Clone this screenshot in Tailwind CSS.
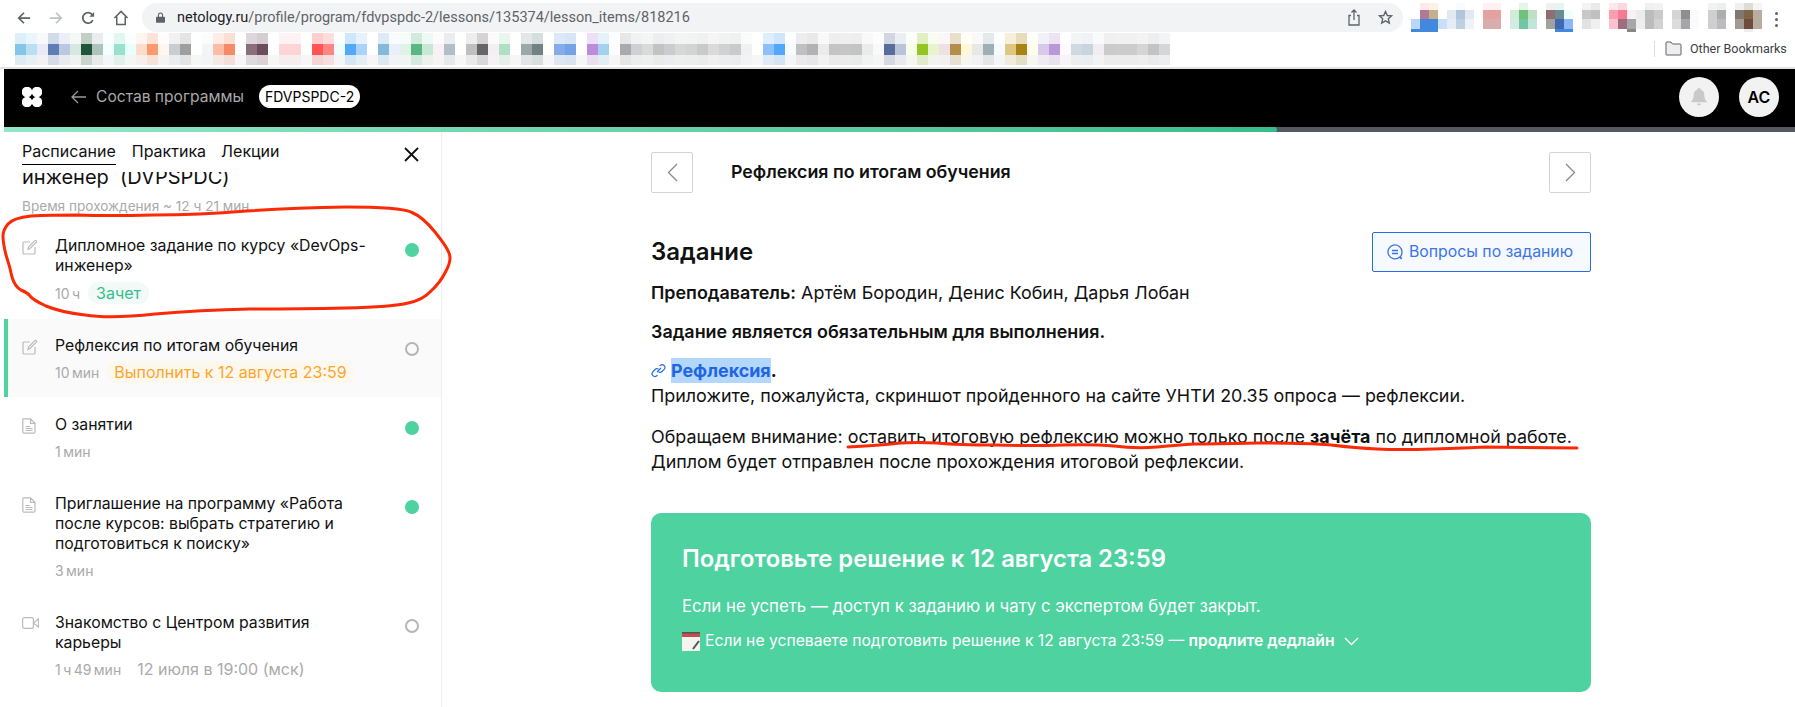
<!DOCTYPE html>
<html lang="ru">

<head>
    <meta charset="UTF-8">
    <title>Нетология</title>
    <script src="https://cdn.jsdelivr.net/npm/@tailwindcss/browser@4"></script>
</head>

<body>
    <div class="relative w-[1795px] h-[707px] overflow-hidden bg-white text-[#111] [font-family:Inter,sans-serif]">

        <!-- browser toolbar -->
        <div class="h-[33px] pt-[3px] flex items-start [font-family:Roboto,sans-serif]">
            <div class="w-[142px] h-[29px] pl-[17px] flex items-center gap-[18px] flex-none">
                <svg class="w-[14px] h-[14px]" viewBox="0 0 16 16" fill="none" stroke="#5f6368" stroke-width="2"><path d="M15 8H2M8 2 2 8l6 6"/></svg>
                <svg class="w-[14px] h-[14px]" viewBox="0 0 16 16" fill="none" stroke="#bdc1c6" stroke-width="2"><path d="M1 8h13M8 2l6 6-6 6"/></svg>
                <svg class="w-[14px] h-[14px]" viewBox="0 0 16 16" fill="none" stroke="#5f6368" stroke-width="2"><path d="M13.500 10.500A6 6 0 1 1 13 4.500"/><path d="M15 1v5.500H9.500" fill="#5f6368" stroke="none"/></svg>
                <svg class="w-[16px] h-[16px]" viewBox="0 0 16 17" fill="none" stroke="#5f6368" stroke-width="1.600"><path d="M1 8.500 8 1.500l7 7M3.500 7v8.500h9V7"/></svg>
            </div>
            <div class="w-[1261px] h-[29px] rounded-full bg-[#f1f3f4] flex items-center pl-[14px] flex-none">
                <svg class="w-[9px] h-[11px] mr-[12px]" viewBox="0 0 11 13" fill="#5f6368"><path d="M1 5.500h9a1 1 0 0 1 1 1V12a1 1 0 0 1-1 1H1a1 1 0 0 1-1-1V6.500a1 1 0 0 1 1-1z"/><path d="M3 6V3.500a2.500 2.500 0 0 1 5 0V6" fill="none" stroke="#5f6368" stroke-width="1.300"/></svg>
                <span class="text-[14.500px] text-[#5f6368]"><span class="text-[#202124]">netology.ru</span>/profile/program/fdvpspdc-2/lessons/135374/lesson_items/818216</span>
                <svg class="w-[14px] h-[17px] ml-auto" viewBox="0 0 14 17" fill="none" stroke="#5f6368" stroke-width="1.300"><path d="M4 6.500H2v9.500h10V6.500h-2M7 11V1M4.500 3.500 7 1l2.500 2.500"/></svg>
                <svg class="w-[15px] h-[15px] ml-[17px] mr-[10px]" viewBox="0 0 15 15" fill="none" stroke="#5f6368" stroke-width="1.400"><path d="m7.500 1.500 1.800 4 4.300.4-3.300 2.900 1 4.300-3.800-2.300-3.800 2.300 1-4.300L1.400 5.900l4.300-.4z"/></svg>
            </div>
            <div class="relative ml-[8px] w-[351px] flex-none h-[30px]">
                <div class="flex flex-col w-full" data-extensions></div>
            </div>
            <div class="ml-[13px] mt-[9px] flex flex-col gap-[3px]">
                <span class="w-[3px] h-[3px] rounded-full bg-[#5f6368]"></span>
                <span class="w-[3px] h-[3px] rounded-full bg-[#5f6368]"></span>
                <span class="w-[3px] h-[3px] rounded-full bg-[#5f6368]"></span>
            </div>
        </div>

        <!-- bookmarks -->
        <div class="h-[34px] flex items-start [font-family:Roboto,sans-serif]">
            <div class="w-[1654px] pl-[15px] flex-none" data-bookmarks></div>
            <div class="mt-[8px] w-px h-[16px] bg-[#dadce0] flex-none"></div>
            <svg class="ml-[10px] mt-[8px] w-[17px] h-[15px] flex-none" viewBox="0 0 17 15" fill="#eeeeee" stroke="#5f6368" stroke-width="1"><path d="M1 13.500V2a1 1 0 0 1 1-1h4l1.500 2H15a1 1 0 0 1 1 1v9.500a.5.5 0 0 1-.5.5h-14a.5.5 0 0 1-.5-.5z"/></svg>
            <span class="ml-[8px] mt-[8px] text-[12.500px] leading-[16px] text-[#3c4043] whitespace-nowrap">Other Bookmarks</span>
        </div>
        <div class="h-[2px] bg-[#e3e3e3]"></div>

        <div class="pl-[4px]">
            <!-- site header -->
            <header class="h-[58px] pb-[3px] bg-black flex items-center pl-[18px] pr-[16px]">
                <svg class="w-[20px] h-[20px]" viewBox="0 0 20 20" fill="#fff"><circle cx="5" cy="5" r="5.300"/><circle cx="15" cy="5" r="5.300"/><circle cx="5" cy="15" r="5.300"/><circle cx="15" cy="15" r="5.300"/></svg>
                <svg class="ml-[29px] w-[15px] h-[14px]" viewBox="0 0 15 14" fill="none" stroke="#9a9a9a" stroke-width="1.300"><path d="M15 7H1M7 1 1 7l6 6"/></svg>
                <span class="ml-[10px] text-[15.600px] text-[#a8a8a8] whitespace-nowrap">Состав программы</span>
                <span class="ml-[15px] h-[23px] px-[6px] rounded-full bg-white text-black text-[14px] leading-[23px] whitespace-nowrap">FDVPSPDC-2</span>
                <span class="ml-auto w-[40px] h-[40px] rounded-full bg-[#f2f2f2] flex items-center justify-center">
                    <svg class="w-[16px] h-[18px]" viewBox="0 0 16 18" fill="#c9c9c9"><path d="M8 0a1.500 1.500 0 0 1 1.500 1.600C12 2.300 13.300 4.500 13.300 7c0 3.500 1 4.800 2.500 6.500.2.300 0 .7-.3.700H.5c-.4 0-.5-.4-.3-.7C1.700 11.800 2.700 10.500 2.700 7c0-2.500 1.300-4.700 3.800-5.400A1.500 1.500 0 0 1 8 0zM6 15.500h4a2 2 0 0 1-4 0z"/></svg>
                </span>
                <span class="ml-[20px] w-[40px] h-[40px] rounded-full bg-[#f2f2f2] flex items-center justify-center text-[16px] font-semibold text-black">АС</span>
            </header>
            <!-- progress -->
            <div class="h-[5px] bg-[#54595f]">
                <div class="h-full w-[1273px] rounded-r-sm bg-gradient-to-r from-[#93e5c8] to-[#37bd8c]"></div>
            </div>

            <div class="flex">
                <!-- sidebar -->
                <aside class="w-[438px] h-[575px] flex-none border-r border-[#eeeeee] overflow-hidden">
                    <div class="h-[40px] pl-[18px] pr-[22px] flex items-start">
                        <span class="h-[33px] pt-[9px] text-[16px] leading-[20px] border-b border-black">Расписание</span>
                        <span class="ml-[16px] pt-[9px] text-[16px] leading-[20px]">Практика</span>
                        <span class="ml-[15px] pt-[9px] text-[16px] leading-[20px]">Лекции</span>
                        <svg class="ml-auto mt-[15px] w-[15px] h-[15px]" viewBox="0 0 15 15" stroke="#111" stroke-width="1.800"><path d="m1 1 13 13M14 1 1 14"/></svg>
                    </div>
                    <div class="h-[16px] pl-[18px] overflow-hidden flex items-end">
                        <span class="text-[20px] leading-[24px] -mb-[1px] whitespace-pre">инженер  (DVPSPDC)</span>
                    </div>
                    <p class="pl-[18px] mt-[8px] h-[20px] text-[13.600px] leading-[20px] text-[#aaaaaa]">Время прохождения ~ 12 ч 21 мин</p>

                    <ul class="mt-[3px]">
                        <li class="flex pl-[18px] pr-[22px] pt-[17px] pb-[14px]">
                            <svg class="w-[16px] h-[16px] mt-[3px] flex-none" viewBox="0 0 16 16" fill="none" stroke="#bbbbbb" stroke-width="1.200"><path d="M8 3H2a1 1 0 0 0-1 1v10a1 1 0 0 0 1 1h10a1 1 0 0 0 1-1V8"/><path d="M6 10.500 6.500 8l6.300-6.300a1 1 0 0 1 1.500 0 1 1 0 0 1 0 1.500L8 9.500z"/></svg>
                            <div class="ml-[17px] flex-1">
                                <p class="text-[15.800px] leading-[20px]">Дипломное задание по курсу «DevOps-<br>инженер»</p>
                                <div class="mt-[5px] h-[24px] flex items-center text-[14px] text-[#aaaaaa] [word-spacing:-1.500px]">
                                    <span>10 ч</span>
                                    <span class="ml-[8px] h-[22px] px-[8px] rounded-full bg-[#f1faf6] text-[16px] leading-[22px] text-[#39bd8d]">Зачет</span>
                                </div>
                            </div>
                            <span class="w-[14px] h-[14px] mt-[7px] rounded-full bg-[#4dd2a0] flex-none"></span>
                        </li>
                        <li class="flex pl-[14px] pr-[22px] pt-[17px] pb-[13px] bg-[#fafafa] border-l-4 border-[#4dd2a0]">
                            <svg class="w-[16px] h-[16px] mt-[3px] flex-none" viewBox="0 0 16 16" fill="none" stroke="#bbbbbb" stroke-width="1.200"><path d="M8 3H2a1 1 0 0 0-1 1v10a1 1 0 0 0 1 1h10a1 1 0 0 0 1-1V8"/><path d="M6 10.500 6.500 8l6.300-6.300a1 1 0 0 1 1.500 0 1 1 0 0 1 0 1.500L8 9.500z"/></svg>
                            <div class="ml-[17px] flex-1">
                                <p class="text-[15.800px] leading-[20px]">Рефлексия по итогам обучения</p>
                                <div class="mt-[4px] h-[24px] flex items-center text-[14px] text-[#aaaaaa]">
                                    <span class="[word-spacing:-1.500px]">10 мин</span>
                                    <span class="ml-[7px] h-[22px] px-[8px] rounded-full bg-[#fdf8ee] text-[16px] leading-[22px] text-[#ffa42b]">Выполнить к 12 августа 23:59</span>
                                </div>
                            </div>
                            <span class="w-[14px] h-[14px] mt-[6px] rounded-full border-2 border-[#b5b5b5] flex-none"></span>
                        </li>
                        <li class="flex pl-[18px] pr-[22px] pt-[18px] pb-[13px]">
                            <svg class="w-[14px] h-[16px] mt-[3px] mr-[2px] flex-none" viewBox="0 0 14 16" fill="none" stroke="#bbbbbb" stroke-width="1.200"><path d="M1.500.8H8.500L13 5.300V14a1.200 1.200 0 0 1-1.200 1.200H2A1.200 1.200 0 0 1 .8 14V1.500a.7.7 0 0 1 .7-.7zM8.500.8v4.500H13M3.500 8.500H8M3.500 10.500h7M3.500 12.500h7"/></svg>
                            <div class="ml-[17px] flex-1">
                                <p class="text-[15.800px] leading-[20px]">О занятии</p>
                                <div class="mt-[4px] h-[24px] flex items-center text-[14px] text-[#aaaaaa] [word-spacing:-1.500px]">1 мин</div>
                            </div>
                            <span class="w-[14px] h-[14px] mt-[6px] rounded-full bg-[#4dd2a0] flex-none"></span>
                        </li>
                        <li class="flex pl-[18px] pr-[22px] pt-[18px] pb-[13px]">
                            <svg class="w-[14px] h-[16px] mt-[3px] mr-[2px] flex-none" viewBox="0 0 14 16" fill="none" stroke="#bbbbbb" stroke-width="1.200"><path d="M1.500.8H8.500L13 5.300V14a1.200 1.200 0 0 1-1.200 1.200H2A1.200 1.200 0 0 1 .8 14V1.500a.7.7 0 0 1 .7-.7zM8.500.8v4.500H13M3.500 8.500H8M3.500 10.500h7M3.500 12.500h7"/></svg>
                            <div class="ml-[17px] flex-1">
                                <p class="text-[15.800px] leading-[20px]">Приглашение на программу «Работа<br>после курсов: выбрать стратегию и<br>подготовиться к поиску»</p>
                                <div class="mt-[4px] h-[24px] flex items-center text-[14px] text-[#aaaaaa] [word-spacing:-1.500px]">3 мин</div>
                            </div>
                            <span class="w-[14px] h-[14px] mt-[6px] rounded-full bg-[#4dd2a0] flex-none"></span>
                        </li>
                        <li class="flex pl-[18px] pr-[22px] pt-[18px] pb-[13px]">
                            <svg class="w-[17px] h-[12px] mt-[4px] -mr-[1px] flex-none" viewBox="0 0 17 12" fill="none" stroke="#bbbbbb" stroke-width="1.200"><rect x=".6" y=".6" width="10.800" height="10.800" rx="2"/><path d="m11.500 6 5-4v8z"/></svg>
                            <div class="ml-[17px] flex-1">
                                <p class="text-[15.800px] leading-[20px]">Знакомство с Центром развития<br>карьеры</p>
                                <div class="mt-[4px] h-[24px] flex items-center text-[14px] text-[#aaaaaa]">
                                    <span class="[word-spacing:-1.500px]">1 ч 49 мин</span>
                                    <span class="ml-[16px] text-[16px]">12 июля в 19:00 (мск)</span>
                                </div>
                            </div>
                            <span class="w-[14px] h-[14px] mt-[6px] rounded-full border-2 border-[#b5b5b5] flex-none"></span>
                        </li>
                    </ul>
                </aside>

                <!-- lesson -->
                <main class="w-[940px] ml-[209px] pt-[20px] flex-none">
                    <div class="h-[41px] flex items-center">
                        <span class="w-[42px] h-[41px] border border-[#d4d4d4] rounded-[2px] flex items-center justify-center">
                            <svg class="w-[11px] h-[19px]" viewBox="0 0 11 19" fill="none" stroke="#888888" stroke-width="1.300"><path d="M10 1 1.500 9.500 10 18"/></svg>
                        </span>
                        <h3 class="ml-[38px] text-[17.800px] font-semibold">Рефлексия по итогам обучения</h3>
                        <span class="ml-auto w-[42px] h-[41px] border border-[#d4d4d4] rounded-[2px] flex items-center justify-center">
                            <svg class="w-[11px] h-[19px]" viewBox="0 0 11 19" fill="none" stroke="#888888" stroke-width="1.300"><path d="M1 1l8.500 8.500L1 18"/></svg>
                        </span>
                    </div>

                    <div class="mt-[39px] h-[40px] flex items-center justify-between">
                        <h2 class="text-[24px] font-semibold">Задание</h2>
                        <span class="w-[219px] h-[40px] border border-[#2b6de5] rounded-[2px] bg-[#f6f9fe] flex items-center pl-[14px] text-[15.800px] text-[#3b75e8] whitespace-nowrap">
                            <svg class="w-[16px] h-[16px] mr-[6px] flex-none" viewBox="0 0 16 16" fill="none" stroke="#3b75e8" stroke-width="1.300"><path d="M14.500 15 12.800 13A7 7 0 1 1 15 8c0 1.800-.5 3.500-1.500 4.500zM5 6.500h6M5 9.500h6"/></svg>
                            Вопросы по заданию
                        </span>
                    </div>

                    <div class="mt-[8px] text-[17.900px] leading-[25px]">
                        <p><b class="font-semibold">Преподаватель:</b> Артём Бородин, Денис Кобин, Дарья Лобан</p>
                        <p class="mt-[14px] font-semibold">Задание является обязательным для выполнения.</p>
                        <p class="mt-[14px]">
                            <svg class="inline w-[15px] h-[15px] -mt-[3px] mr-[5px]" viewBox="0 0 15 15" fill="none" stroke="#2b6de5" stroke-width="1.200"><path d="M6 9l4-4M8.500 3.200l1-1a2.800 2.800 0 0 1 3.900 3.900L11 8.500a2.800 2.800 0 0 1-3.500.4M6.500 12l-1 1a2.800 2.800 0 0 1-3.900-3.900L4 6.500a2.800 2.800 0 0 1 3.500-.4"/></svg><span class="bg-[#b3d7ff] py-[2px] font-bold text-[#1f66e5]">Рефлексия</span><b class="font-bold">.</b><br>
                            Приложите, пожалуйста, скриншот пройденного на сайте УНТИ 20.35 опроса — рефлексии.
                        </p>
                        <p class="mt-[16px]">Обращаем внимание: оставить итоговую рефлексию можно только после <b class="font-bold">зачёта</b> по дипломной работе.<br>Диплом будет отправлен после прохождения итоговой рефлексии.</p>
                    </div>

                    <section class="mt-[39px] h-[179px] rounded-[10px] bg-[#4dd2a0] px-[31px] pt-[31px] text-white">
                        <h2 class="text-[23.800px] leading-[30px] font-semibold">Подготовьте решение к 12 августа 23:59</h2>
                        <p class="mt-[20px] text-[16.800px] leading-[24px]">Если не успеть — доступ к заданию и чату с экспертом будет закрыт.</p>
                        <div class="mt-[13px] h-[20px] flex items-center text-[15.700px] whitespace-nowrap">
                            <svg class="w-[18px] h-[19px] mr-[5px] flex-none" viewBox="0 0 18 19"><rect width="18" height="19" fill="#f4f4f0"/><rect width="18" height="5" fill="#c4504a"/><rect width="18" height="1.500" fill="#555555"/><path d="m17 9-6 8" stroke="#555555" stroke-width="2"/></svg>
                            <span>Если не успеваете подготовить решение к 12 августа 23:59 — <b class="font-semibold">продлите дедлайн</b></span>
                            <svg class="ml-[9px] w-[15px] h-[9px] flex-none" viewBox="0 0 15 9" fill="none" stroke="#fff" stroke-width="1.400"><path d="m1 1 6.500 6.500L14 1"/></svg>
                        </div>
                    </section>
                </main>
            </div>
        </div>

        <!-- red pen marks on top of the screenshot -->
        <svg class="absolute inset-0 w-[1795px] h-[707px] pointer-events-none" viewBox="0 0 1795 707" fill="none" stroke="#fb2a06" stroke-width="3" stroke-linecap="round">
            <path d="M3 236Q3 230 8 224Q13 218 31 216Q50 215 78 215Q107 216 153 215Q200 215 246 211Q293 208 346 207Q400 207 411 212Q423 217 435 232Q447 247 449 253Q452 260 446 271Q440 283 431 291Q423 300 408 303Q393 307 346 308Q300 309 250 309Q200 310 155 314Q110 319 85 315Q60 312 46 306Q33 300 30 296Q28 293 21 290Q15 287 12 277Q10 267 6 255Q3 243 3 236"/>
            <path d="M848 447Q885 445 900 443Q916 442 937 443Q958 445 995 445Q1032 446 1062 445Q1093 444 1114 446Q1136 449 1157 447Q1179 445 1194 444Q1209 444 1258 443Q1307 443 1331 445Q1356 448 1377 449Q1399 450 1433 449Q1467 448 1485 447Q1503 447 1577 448"/>
        </svg>
    </div>

    <script>
        // blurred bookmark and extension tiles, one colour per tile
        const w = '#ffffff'
        const bookmarkTiles = ['#85c5ea','#b8e0f5','#e8eaf5','#5f7db5','#bcc7e2','#d6e8df','#20553a','#aec4bb','#f3fffe','#98e2ca','#e8fffb','#ffdccc','#fc9a6d','#fff6ef','#c9cdd0','#9e9e9e',w,'#f0f5f9','#fdbca4','#f48b65',w,'#8a6e7c','#6c4d5c',w,'#fdd5d6','#fdd5d6',w,'#ff5555','#ff8585','#edfdfe','#52a9f6','#aad2fb',w,'#85b9d9','#e8f0fb','#e0f3e8','#59b784','#c6e8d5','#f8f0f6','#b0bec8',w,'#bfbfbf','#666666','#f3eff3','#b0e0c4',w,'#9aa8a8','#708284',w,'#85ace8','#74a2e4',w,'#bd8ddb','#a3d2ee','#fdfdfd','#a8aaad','#cfd0d2','#d9dbda','#c2c4c3','#cbcccf','#d6d7d7','#d2d3d3','#c8c9cb','#dadada','#d0d1d3','#c9cbca','#f0f1f3',w,'#8cc0fd','#52a6fb','#f5fbff','#c0c0c0','#b2b2b5','#ebebeb','#c4c4c4','#c6c6c6','#c3c4c4','#ebebeb','#f8f9fe','#566e99','#bac3da','#f6ffe6','#94c523','#e7f5cf','#efe0e4','#b28e4a','#fff8d8','#e8e8e8','#9eb0b4','#f5faff','#e0c683','#a88414','#fffeea','#d8c8ea','#b898d6','#fef8ff','#d0d8e0','#c8d5df','#f0eef0','#cbcbcb','#cccccc','#cccccc','#d5d5d5','#c2c3c5','#d5d6d8']

        const bookmarks = document.querySelector('[data-bookmarks]')
        const bookmarkRows = [['h-[11px]', 28, w], ['h-[11px]', 100, w], ['h-[10px]', 20, '#f4f4f4']]
        bookmarkRows.forEach(([height, amount, base]) => {
            const row = document.createElement('div')
            row.className = 'flex ' + height
            bookmarkTiles.forEach(c => {
                const tile = document.createElement('span')
                tile.className = 'flex-none w-[11px] h-full'
                tile.style.background = `color-mix(in srgb, ${c} ${amount}%, ${base})`
                row.append(tile)
            })
            bookmarks.append(row)
        })

        // columns left to right: top, middle, lower, underline
        const extensionTiles = [
            [w,w,'#bcd6f8','#4189dd'],['#fde8ea','#b07a95','#4189dd','#4189dd'],['#fdf2e5','#c4b08e','#4189dd','#4189dd'],[w,w,'#ccdff8',w],
            [w,'#e0e8f0','#e6ecf2',w],['#f8fbfd','#afc5da','#bcd0e2',w],[w,'#e0e8f0','#eef3f8',w],[w,w,w,w],
            ['#fff0f2','#e5a0a0','#d9adad',w],['#fff0f2','#e5a0a0','#d9adad',w],[w,w,w,w],[w,'#d4ead8','#d3ebe3',w],
            ['#e6f4e8','#6fc17c','#72c5a5',w],[w,'#bfe0c4','#bfe6d9',w],[w,w,w,w],['#f0f0f0','#8e6f70','#a0a29e',w],
            ['#e6f4f4','#6a8c90','#4169b2','#4189dd'],[w,'#edfefd','#8ab8f8','#4189dd'],[w,w,w,w],['#f3f3f3','#c8c8c8','#e2e2e2',w],
            ['#eaeaea','#c0c0c0','#eef0f2',w],[w,w,w,w],['#fde8ec','#fb9cb0','#fcc0cf',w],['#fbd8e0','#f67a90','#9d6f7c',w],
            [w,'#fdf0f5','#a4a8a8','#888888'],[w,'#ececec','#eeeeee',w],['#f0f0f0','#bcbcbc','#bcbcbc',w],['#f2f2f2','#cacaca','#d2d2d2',w],
            [w,w,w,w],[w,'#d5d5d5','#dcdcdc',w],[w,'#8e8e90','#a6a6a8',w],[w,'#fafafa','#fafafa',w],[w,w,w,w],
            ['#f2f2f2','#cfcfcf','#cfcfcf',w],['#eeeeee','#acaeb0','#bcbcbe',w],[w,w,w,w],['#f0f0f0','#7e7872','#a39a94',w],
            ['#dddcd5','#816448','#704c3c','#eeeeee'],['#f5f5f5','#b8ad9f','#b8ad9f',w]
        ]
        const extensions = document.querySelector('[data-extensions]')
        const extensionRows = ['h-[7px]', 'h-[9px]', 'h-[10px]', 'h-[3px]']
        extensionRows.forEach((height, i) => {
            const row = document.createElement('div')
            row.className = 'flex ' + height
            extensionTiles.forEach(col => {
                const tile = document.createElement('span')
                tile.className = 'flex-none w-[9px] h-full'
                tile.style.background = col[i]
                row.append(tile)
            })
            extensions.append(row)
        })
    </script>
</body>

</html>
